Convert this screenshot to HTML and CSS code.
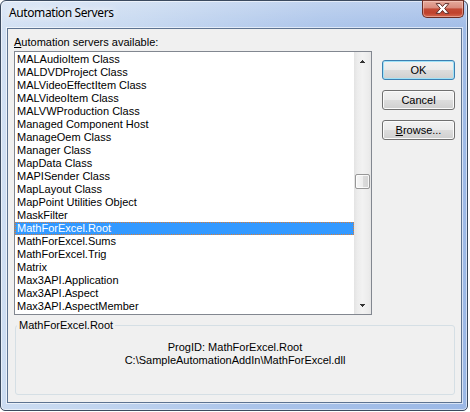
FILE: index.html
```html
<!DOCTYPE html>
<html>
<head>
<meta charset="utf-8">
<link rel="stylesheet" href="styles.css">
</head>
<body>
<div class="window">
  <div class="titlebar">
    <span class="title">Automation Servers</span>
    <div class="close">
      <svg width="42" height="18" viewBox="0 0 42 18">
        <polygon points="14.5,3.5 18.5,3.5 21,6.5 23.5,3.5 27.5,3.5 23.2,8.5 27.5,13.5 23.5,13.5 21,10.5 18.5,13.5 14.5,13.5 18.8,8.5" fill="#ffffff" stroke="#5a2a26" stroke-width="1" stroke-linejoin="round"/>
      </svg>
    </div>
  </div>
  <div class="client">
    <div class="top">
      <div class="left">
        <div class="label"><u>A</u>utomation servers available:</div>
        <div class="listbox">
          <ul class="items">
            <li>MALAudioItem Class</li>
            <li>MALDVDProject Class</li>
            <li>MALVideoEffectItem Class</li>
            <li>MALVideoItem Class</li>
            <li>MALVWProduction Class</li>
            <li>Managed Component Host</li>
            <li>ManageOem Class</li>
            <li>Manager Class</li>
            <li>MapData Class</li>
            <li>MAPISender Class</li>
            <li>MapLayout Class</li>
            <li>MapPoint Utilities Object</li>
            <li>MaskFilter</li>
            <li class="sel">MathForExcel.Root</li>
            <li>MathForExcel.Sums</li>
            <li>MathForExcel.Trig</li>
            <li>Matrix</li>
            <li>Max3API.Application</li>
            <li>Max3API.Aspect</li>
            <li>Max3API.AspectMember</li>
          </ul>
          <div class="scrollbar">
            <div class="sb-btn up">
              <svg width="5" height="3" viewBox="0 0 5 3" shape-rendering="crispEdges"><rect x="2" y="0" width="1" height="1" fill="#333"/><rect x="1" y="1" width="3" height="1" fill="#333"/><rect x="0" y="2" width="5" height="1" fill="#333"/></svg>
            </div>
            <div class="sb-track"><div class="thumb"></div></div>
            <div class="sb-btn down">
              <svg width="5" height="3" viewBox="0 0 5 3" shape-rendering="crispEdges"><rect x="0" y="0" width="5" height="1" fill="#333"/><rect x="1" y="1" width="3" height="1" fill="#333"/><rect x="2" y="2" width="1" height="1" fill="#333"/></svg>
            </div>
          </div>
        </div>
      </div>
      <div class="buttons">
        <button class="btn default">OK</button>
        <button class="btn">Cancel</button>
        <button class="btn"><u>B</u>rowse...</button>
      </div>
    </div>
    <fieldset class="group">
      <legend>MathForExcel.Root</legend>
      <div class="info">ProgID: MathForExcel.Root<br>C:\SampleAutomationAddIn\MathForExcel.dll</div>
    </fieldset>
  </div>
</div>
</body>
</html>
```
FILE: styles.css
```css
* { box-sizing: border-box; }
body {
  margin: 0;
  background: #ffffff;
  font-family: "Liberation Sans", Arial, sans-serif;
  font-size: 11px;
  color: #000;
}
.window {
  width: 468px;
  height: 411px;
  border: 1px solid #3b4a5f;
  border-radius: 6px 6px 5px 5px;
  background:
    linear-gradient(180deg, rgba(255,255,255,0.25) 0px, rgba(255,255,255,0) 30px),
    linear-gradient(100deg, #d3e1f3 0%, #c6d8f0 25%, #abc4ea 60%, #9bb8e6 100%);
  box-shadow: inset 0 0 0 1px rgba(255,255,255,0.55);
  display: flex;
  flex-direction: column;
  padding-bottom: 7px;
}
.titlebar {
  height: 27px;
  flex: none;
  display: flex;
  justify-content: space-between;
  align-items: flex-start;
  padding-left: 8px;
}
.title {
  font-family: "Noto Sans", "Open Sans", sans-serif;
  font-size: 12px;
  letter-spacing: -0.4px;
  line-height: 16px;
  margin-top: 4px;
  color: #000;
  text-shadow: 0 0 7px #fff, 0 0 10px rgba(255,255,255,0.9);
}
.close {
  width: 42px;
  height: 18px;
  margin: -1px 3px 0 0;
  border: 1px solid #6a2c24;
  border-top-color: #7a3a30;
  border-radius: 0 0 5px 5px;
  background: linear-gradient(180deg, #e6aa9c 0%, #d98c7e 42%, #c24a35 50%, #c0412c 75%, #d4684f 100%);
  box-shadow: inset 0 0 0 1px rgba(255,220,210,0.45);
  display: flex;
}
.close svg { margin: -1px 0 0 -1px; }
.client {
  flex: 1;
  margin: 0 5px 0 6px;
  border: 1px solid #5d7391;
  box-shadow: 0 0 0 1px rgba(255,255,255,0.6);
  background: #f0f0f0;
  padding: 7px 6px 0 6px;
  display: flex;
  flex-direction: column;
}
.top {
  display: flex;
  gap: 10px;
}
.left { width: 358px; }
.label {
  height: 13px;
  line-height: 13px;
  margin-bottom: 2px;
  white-space: nowrap;
}
.listbox {
  height: 264px;
  border: 1px solid #828790;
  background: #fff;
  display: flex;
}
.items {
  list-style: none;
  margin: 0;
  padding: 1px 0;
  width: 339px;
}
.items li {
  height: 13px;
  line-height: 13px;
  padding-left: 2px;
  white-space: nowrap;
}
.items li.sel {
  background: #3399ff;
  color: #fff;
  outline: 1px dotted #d87e3a;
  outline-offset: -1px;
}
.scrollbar {
  width: 17px;
  display: flex;
  flex-direction: column;
  background: linear-gradient(90deg, #e3e3e3 0%, #ececec 20%, #f2f2f2 50%, #ececec 85%, #e6e6e6 100%);
}
.sb-btn {
  height: 17px;
  flex: none;
  display: flex;
  align-items: center;
  justify-content: center;
}
.sb-btn.up { padding-top: 2px; }
.sb-btn svg { display: block; }
.sb-track {
  flex: 1;
  padding-top: 105px;
}
.thumb {
  width: 15px;
  height: 15px;
  margin: 0 auto;
  border: 1px solid #979797;
  border-radius: 2px;
  background: linear-gradient(90deg, #f6f6f6 0%, #eeeeee 50%, #dcdcdc 51%, #d4d4d4 100%);
  box-shadow: inset 0 0 0 1px rgba(255,255,255,0.8);
}
.buttons {
  width: 73px;
  display: flex;
  flex-direction: column;
  gap: 10px;
  padding-top: 24px;
}
.btn {
  height: 20px;
  padding: 0;
  font-family: "Liberation Sans", Arial, sans-serif;
  font-size: 11px;
  line-height: 18px;
  color: #000;
  border: 1px solid #707070;
  border-radius: 3px;
  background: linear-gradient(180deg, #f2f2f2 0%, #ebebeb 48%, #dddddd 52%, #cfcfcf 100%);
  box-shadow: inset 0 0 0 1px #fbfbfb;
}
.btn.default {
  border-color: #3c7fb1;
  box-shadow: inset 0 0 0 1px #9fe2f8;
}
.group {
  margin: 4px 0 0 1px;
  width: 440px;
  height: 76px;
  padding: 0;
  border: 1px solid #d5dfe5;
  border-radius: 3px;
  min-width: 0;
}
.group legend {
  padding: 0 2px;
  margin-left: 1px;
  line-height: 13px;
  font-size: 11px;
}
.info {
  text-align: center;
  line-height: 13px;
  padding-top: 9px;
}
```
